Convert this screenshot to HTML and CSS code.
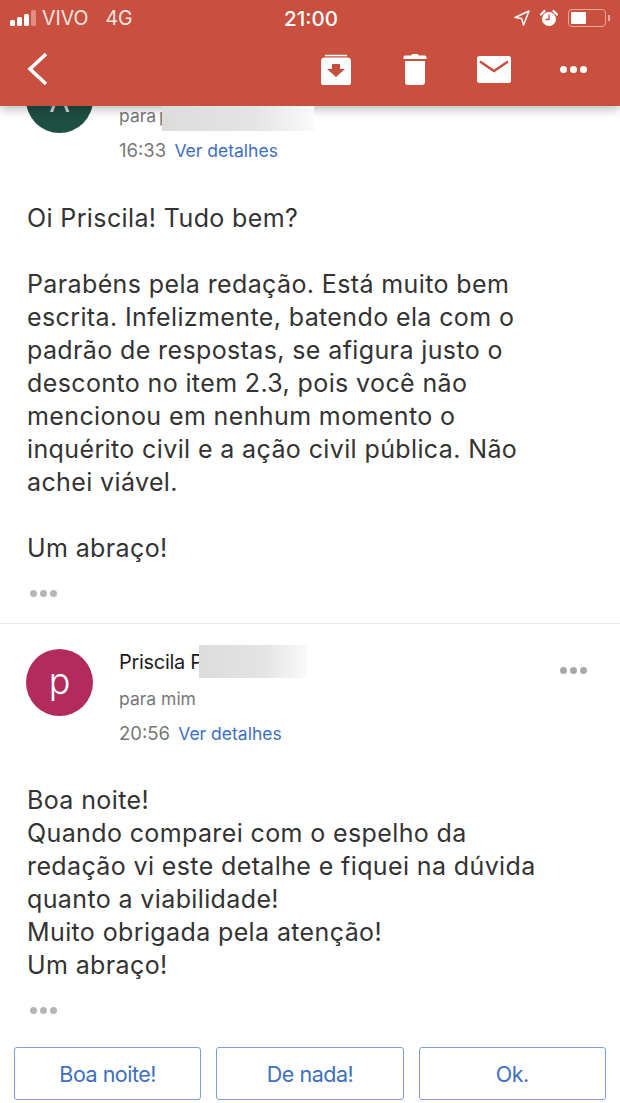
FILE: index.html
```html
<!DOCTYPE html>
<html lang="pt-BR">
<head>
  <meta charset="UTF-8">
  <title>Mensagem</title>
  <link rel="stylesheet" href="styles.css">
</head>
<body>
  <div class="screen">
    <header class="topbar">
      <div class="status">
        <div class="status-left">
          <span class="signal"><i></i><i></i><i></i><i class="off"></i></span>
          <span>VIVO</span>
          <span class="net">4G</span>
        </div>
        <div class="clock">21:00</div>
        <div class="status-right">
          <svg class="loc" width="16" height="16" viewBox="0 0 16 16"><path d="M15 1 1 7.500l6.600.9L9.500 15z" fill="none" stroke="#fff" stroke-width="1.500" stroke-linejoin="round"/></svg>
          <svg class="alarm" width="18" height="18" viewBox="0 0 18 18"><circle cx="9" cy="10" r="7" fill="#fff"/><path d="M1 5.500 4.500 2M17 5.500 13.500 2" stroke="#fff" stroke-width="2.200" stroke-linecap="round"/><path d="M9 5.500V10.500H5.500" fill="none" stroke="#c94f3f" stroke-width="1.300"/></svg>
          <div class="battery"><div class="battery-fill"></div></div>
          <div class="battery-tip"></div>
        </div>
      </div>
      <div class="toolbar">
        <svg class="back" width="24" height="36" viewBox="0 0 24 36"><path d="M21 3 5 18l16 15" fill="none" stroke="#fff" stroke-width="3.600"/></svg>
        <div class="actions">
          <svg class="act-archive" width="32" height="32" viewBox="0 0 32 32"><path d="M5 2.500h22" stroke="#fff" stroke-width="1.500" fill="none"/><path d="M1 8a3.500 3.500 0 0 1 3.500-3.500h23A3.500 3.500 0 0 1 31 8v22a2 2 0 0 1-2 2H3a2 2 0 0 1-2-2z" fill="#fff"/><path d="M12 11h8v5h5l-9 8-9-8h5z" fill="#c94f3f"/></svg>
          <svg width="24" height="32" viewBox="0 0 24 32"><path d="M8 2.500a2 2 0 0 1 2-1.500h4a2 2 0 0 1 2 1.500h6a1.500 1.500 0 0 1 1.500 1.500v2H.5V4A1.500 1.500 0 0 1 2 2.500z" fill="#fff"/><path d="M2 8h20v21a3 3 0 0 1-3 3H5a3 3 0 0 1-3-3z" fill="#fff"/></svg>
          <svg width="34" height="27" viewBox="0 0 34 27"><rect width="34" height="27" rx="2.500" fill="#fff"/><path d="M3 5.500 17 15 31 5.500" fill="none" stroke="#c94f3f" stroke-width="2.600"/></svg>
          <svg class="act-more" width="27" height="7" viewBox="0 0 27 7"><circle cx="3.500" cy="3.500" r="3.500" fill="#fff"/><circle cx="13.500" cy="3.500" r="3.500" fill="#fff"/><circle cx="23.500" cy="3.500" r="3.500" fill="#fff"/></svg>
        </div>
      </div>
    </header>

    <main class="thread">
      <section class="message first">
        <div class="msg-head">
          <div class="avatar green">A</div>
          <div class="meta">
            <div class="name"></div>
            <div class="to tight">para p<span class="blur blur-to"></span></div>
            <div class="when">16:33 <a class="details">Ver detalhes</a></div>
          </div>
        </div>
        <div class="body-text">
          <p>Oi Priscila! Tudo bem?</p>
          <p>Parabéns pela redação. Está muito bem<br>escrita. Infelizmente, batendo ela com o<br>padrão de respostas, se afigura justo o<br>desconto no item 2.3, pois você não<br>mencionou em nenhum momento o<br>inquérito civil e a ação civil pública. Não<br>achei viável.</p>
          <p>Um abraço!</p>
        </div>
        <div class="dots"><i></i><i></i><i></i></div>
      </section>

      <section class="message second">
        <div class="msg-head">
          <div class="avatar pink">p</div>
          <div class="meta">
            <div class="name">Priscila P<span class="blur blur-name"></span></div>
            <div class="to">para mim</div>
            <div class="when">20:56 <a class="details">Ver detalhes</a></div>
          </div>
          <div class="dots more"><i></i><i></i><i></i></div>
        </div>
        <div class="body-text">
          <p>Boa noite!<br>Quando comparei com o espelho da<br>redação vi este detalhe e fiquei na dúvida<br>quanto a viabilidade!<br>Muito obrigada pela atenção!<br>Um abraço!</p>
        </div>
        <div class="dots"><i></i><i></i><i></i></div>
      </section>
    </main>

    <footer class="replies">
      <button>Boa noite!</button>
      <button>De nada!</button>
      <button>Ok.</button>
    </footer>
  </div>
</body>
</html>
```

FILE: styles.css
```css
* {
  box-sizing: border-box;
}
html, body {
  margin: 0;
  padding: 0;
  background: #fff;
}
body {
  font-family: Inter, "Liberation Sans", sans-serif;
  color: #2a2a2a;
}
.screen {
  width: 620px;
  height: 1103px;
  overflow: hidden;
  display: flex;
  flex-direction: column;
}

/* barra vermelha */
.topbar {
  flex: none;
  height: 106px;
  background: #c94f3f;
  color: #fff;
  box-shadow: 0 3px 10px rgba(0,0,0,0.28);
  position: relative;
  z-index: 2;
}
.status {
  height: 36px;
  padding: 0 10px;
  display: flex;
  align-items: center;
  justify-content: space-between;
  position: relative;
  font-size: 19.500px;
}
.status-left {
  display: flex;
  align-items: center;
  gap: 6px;
  color: #fbe6e2;
}
.net {
  margin-left: 11px;
}
.signal {
  display: flex;
  align-items: flex-end;
  gap: 2px;
  height: 16px;
}
.signal i {
  width: 5px;
  background: #fff;
  border-radius: 1.500px;
}
.signal i:nth-child(1) { height: 6px; }
.signal i:nth-child(2) { height: 9px; }
.signal i:nth-child(3) { height: 12px; }
.signal i:nth-child(4) { height: 16px; }
.signal .off {
  background: #e08d82;
}
.clock {
  position: absolute;
  left: 2px;
  right: 0;
  text-align: center;
  font-weight: 500;
  font-size: 20.500px;
}
.status-right {
  display: flex;
  align-items: center;
  position: relative;
}
.alarm {
  margin-left: 10px;
}
.battery {
  width: 38px;
  height: 18px;
  margin-left: 10px;
  padding: 2px;
  border: 1.500px solid #eda79d;
  border-radius: 4px;
}
.battery-fill {
  width: 15px;
  height: 100%;
  background: #fff;
  border-radius: 1px;
}
.battery-tip {
  width: 2px;
  height: 6px;
  margin-left: 2px;
  background: #eda79d;
}
.toolbar {
  height: 70px;
  padding: 0 33px 4px 25px;
  display: flex;
  align-items: center;
  justify-content: space-between;
}
.actions {
  display: flex;
  align-items: center;
  gap: 50px;
}
.act-archive {
  margin-right: 1px;
}
.act-more {
  margin-left: -1px;
}

/* mensagens */
.thread {
  flex: 1;
  min-height: 0;
  overflow: hidden;
}
.message.first {
  margin-top: -40px;
  height: 558px;
  border-bottom: 1.500px solid #e8e8e8;
}
.message.second {
  padding-top: 25px;
}
.msg-head {
  display: flex;
  padding-left: 26px;
  position: relative;
}
.avatar {
  width: 67px;
  height: 67px;
  border-radius: 50%;
  flex: none;
  display: flex;
  align-items: center;
  justify-content: center;
  color: #fff;
  font-size: 36px;
}
.green {
  background: #1e4f43;
  color: #d5dfdb;
  font-size: 30px;
  padding-top: 3px;
}
.pink {
  background: #b22b5c;
  padding-bottom: 4px;
  font-weight: 300;
}
.meta {
  margin-left: 26px;
}
.name {
  font-size: 20px;
  line-height: 26px;
  height: 26px;
  color: #1c1c1c;
  position: relative;
  margin-bottom: 12px;
  letter-spacing: -0.300px;
}
.to {
  font-size: 17.500px;
  line-height: 24px;
  color: #777;
  position: relative;
}
.to.tight {
  word-spacing: -2px;
}
.when {
  margin-top: 10px;
  font-size: 18.500px;
  line-height: 24px;
  color: #777;
}
.details {
  margin-left: 3px;
  font-size: 17.500px;
  color: #3e6fc0;
}
.blur {
  position: absolute;
  display: block;
  background: linear-gradient(90deg, #dcdcdc, #e4e4e4 60%, #fafafa);
}
.blur-to {
  left: 43px;
  top: -2px;
  width: 152px;
  height: 29px;
  z-index: 3;
}
.blur-name {
  left: 80px;
  top: -4px;
  width: 108px;
  height: 33px;
}
.body-text {
  margin-top: 39px;
  padding-left: 27px;
  font-size: 25px;
  line-height: 33px;
  letter-spacing: 0.380px;
  color: #333;
}
.second .body-text {
  margin-top: 38px;
}
.body-text p {
  margin: 0 0 33px;
}
.body-text p:last-child {
  margin-bottom: 0;
}
.dots {
  display: flex;
  gap: 3px;
  margin: 25px 0 0 30px;
}
.dots i {
  width: 7px;
  height: 7px;
  border-radius: 50%;
  background: #b5b5b5;
}
.dots.more {
  position: absolute;
  right: 33px;
  top: 18px;
  margin: 0;
}
.dots.more i {
  background: #a8a8a8;
}

/* respostas rapidas */
.replies {
  flex: none;
  height: 56px;
  padding: 0 14px 3px;
  display: grid;
  grid-template-columns: repeat(3, 1fr);
  gap: 15px;
}
.replies button {
  background: #fff;
  border: 1.500px solid #7c9fd8;
  border-radius: 3px;
  font-family: inherit;
  font-size: 21.500px;
  color: #3e6fc0;
  letter-spacing: -0.500px;
  padding: 0;
}
```
